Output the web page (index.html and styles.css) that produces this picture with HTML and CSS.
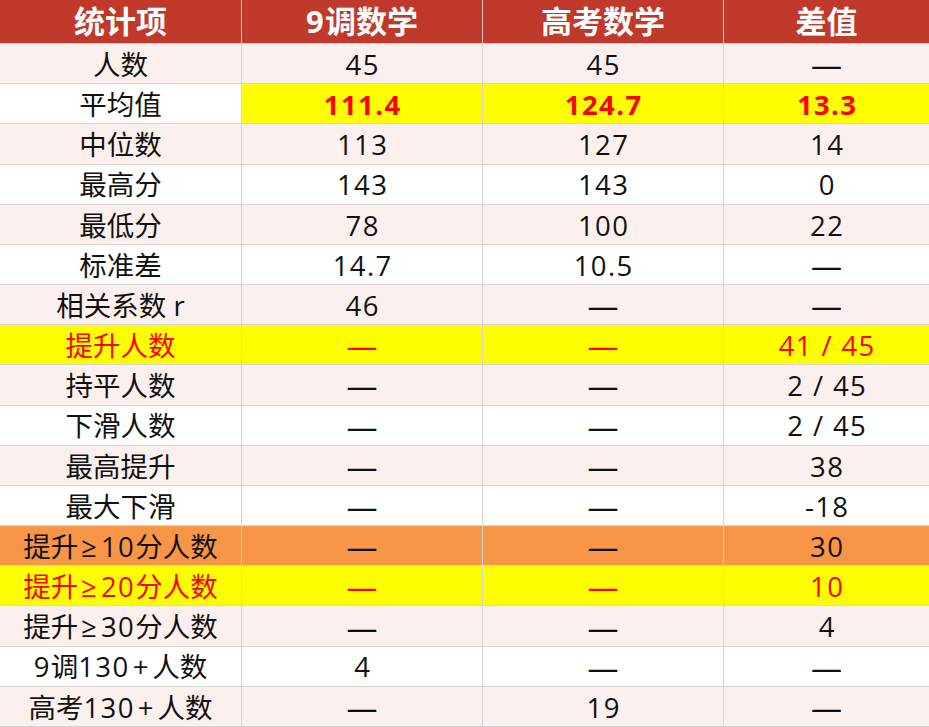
FILE: index.html
```html
<!DOCTYPE html>
<html lang="zh">
<head>
<meta charset="utf-8">
<title>统计</title>
<link rel="stylesheet" href="styles.css">
</head>
<body>
<div class="table">
  <div class="c h">统计项</div><div class="c h"><span class="n">9</span>调数学</div><div class="c h">高考数学</div><div class="c h last">差值</div>

  <div class="c p">人数</div><div class="c p v">45</div><div class="c p v">45</div><div class="c p d last">—</div>
  <div class="c w">平均值</div><div class="c y b v">111.4</div><div class="c y b v">124.7</div><div class="c y b v last">13.3</div>
  <div class="c p">中位数</div><div class="c p v">113</div><div class="c p v">127</div><div class="c p v last">14</div>
  <div class="c w">最高分</div><div class="c w v">143</div><div class="c w v">143</div><div class="c w v last">0</div>
  <div class="c p">最低分</div><div class="c p v">78</div><div class="c p v">100</div><div class="c p v last">22</div>
  <div class="c w">标准差</div><div class="c w v">14.7</div><div class="c w v">10.5</div><div class="c w d last">—</div>
  <div class="c p">相关系数 r</div><div class="c p v">46</div><div class="c p d">—</div><div class="c p d last">—</div>
  <div class="c y r">提升人数</div><div class="c y r d">—</div><div class="c y r d">—</div><div class="c y r v last">41 / 45</div>
  <div class="c p">持平人数</div><div class="c p d">—</div><div class="c p d">—</div><div class="c p v last">2 / 45</div>
  <div class="c w">下滑人数</div><div class="c w d">—</div><div class="c w d">—</div><div class="c w v last">2 / 45</div>
  <div class="c p">最高提升</div><div class="c p d">—</div><div class="c p d">—</div><div class="c p v last">38</div>
  <div class="c w">最大下滑</div><div class="c w d">—</div><div class="c w d">—</div><div class="c w v last">-18</div>
  <div class="c o">提升<span class="sym">≥</span><span class="n">10</span>分人数</div><div class="c o d">—</div><div class="c o d">—</div><div class="c o v last">30</div>
  <div class="c y r">提升<span class="sym">≥</span><span class="n">20</span>分人数</div><div class="c y r d">—</div><div class="c y r d">—</div><div class="c y r v last">10</div>
  <div class="c p">提升<span class="sym">≥</span><span class="n">30</span>分人数</div><div class="c p d">—</div><div class="c p d">—</div><div class="c p v last">4</div>
  <div class="c w"><span class="n">9</span>调<span class="n">130</span><span class="sym">+</span>人数</div><div class="c w v">4</div><div class="c w d">—</div><div class="c w d last">—</div>
  <div class="c p">高考<span class="n">130</span><span class="sym">+</span>人数</div><div class="c p d">—</div><div class="c p v">19</div><div class="c p d last">—</div>
</div>
</body>
</html>
```

FILE: styles.css
```css
html, body {
  margin: 0;
  padding: 0;
  background: #ffffff;
}

.table {
  display: grid;
  grid-template-columns: 242px 241px 241px 1fr;
  grid-template-rows: 44px repeat(17, 1fr);
  width: 929px;
  height: 727px;
  font-family: "Open Sans", "Noto Sans CJK SC", sans-serif;
  font-size: 27.5px;
  color: #111111;
}

.c {
  display: flex;
  align-items: center;
  justify-content: center;
  border-right: 1px solid #d9d4d4;
  border-bottom: 1px solid #d9d4d4;
  line-height: 1;
  white-space: nowrap;
  padding-top: 2px;
  box-sizing: border-box;
}

.c.last {
  border-right: none;
}

.h {
  background: #c0392b;
  color: #ffffff;
  font-weight: 700;
  font-size: 31px;
  border-color: #e8c4bf;
  border-bottom: 1px solid #e0cfcc;
  padding-top: 0;
}

.v {
  letter-spacing: 1.4px;
  text-indent: 1.4px;
}

.n {
  letter-spacing: 1.4px;
}

.sym {
  margin: 0 4px 0 3px;
}

.d {
  font-size: 31px;
}

.p {
  background: #fcf0ee;
}

.w {
  background: #ffffff;
}

.y {
  background: #ffff00;
}

.o {
  background: #f79646;
}

.r {
  color: #ff0000;
}

.b {
  color: #ff0000;
  font-weight: 700;
}
```
